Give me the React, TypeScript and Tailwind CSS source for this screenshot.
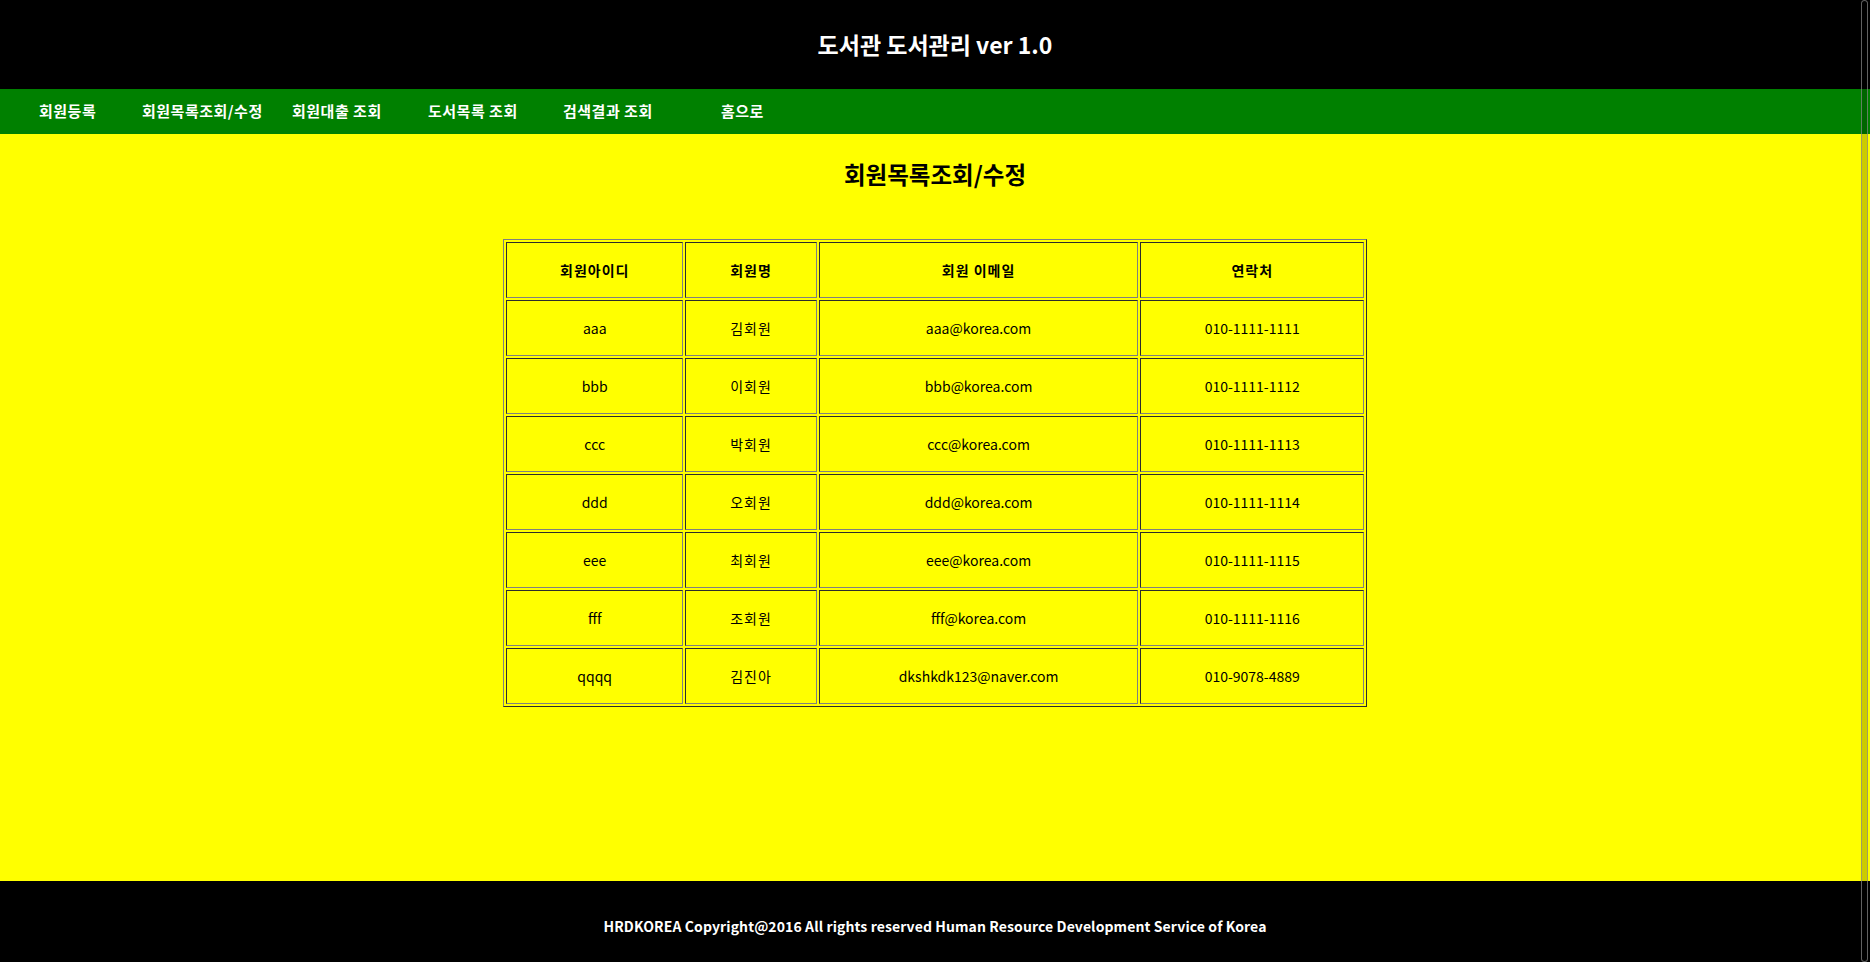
const members = [
  { id: "aaa", name: "김회원", email: "aaa@korea.com", phone: "010-1111-1111" },
  { id: "bbb", name: "이회원", email: "bbb@korea.com", phone: "010-1111-1112" },
  { id: "ccc", name: "박회원", email: "ccc@korea.com", phone: "010-1111-1113" },
  { id: "ddd", name: "오회원", email: "ddd@korea.com", phone: "010-1111-1114" },
  { id: "eee", name: "최회원", email: "eee@korea.com", phone: "010-1111-1115" },
  { id: "fff", name: "조회원", email: "fff@korea.com", phone: "010-1111-1116" },
  { id: "qqqq", name: "김진아", email: "dkshkdk123@naver.com", phone: "010-9078-4889" },
];

const menus = [
  { label: "회원등록", width: "w-[103px]" },
  { label: "회원목록조회/수정", width: "w-[150px]" },
  { label: "회원대출 조회", width: "w-[136px]" },
  { label: "도서목록 조회", width: "w-[135px]" },
  { label: "검색결과 조회", width: "w-[158px]" },
  { label: "홈으로", width: "w-[100px]" },
];

const cell = "border border-[#808080] [border-style:inset] text-center align-middle";

const App = () => {
  return (
    <div className="relative flex flex-col w-full h-[962px] font-['Noto_Sans_CJK_KR','Noto_Sans',sans-serif]">
      <header className="h-[89px] bg-black flex items-center justify-center">
        <h1 className="text-white text-[23px] font-bold leading-none">
          도서관 도서관리 ver 1.0
        </h1>
      </header>

      <nav className="h-[45px] bg-[#008000] flex items-center pl-[39px]">
        {menus.map((m) => (
          <a
            key={m.label}
            href="#"
            className={`${m.width} shrink-0 text-white text-[15px] tracking-[0.5px] font-bold whitespace-nowrap`}
          >
            {m.label}
          </a>
        ))}
      </nav>

      <main className="h-[747px] bg-[#ffff00] flex flex-col items-center">
        <h2 className="mt-[25px] text-[23.5px] font-bold text-black leading-[30px]">
          회원목록조회/수정
        </h2>
        <table className="mt-[50px] w-[864px] table-fixed border-separate border-spacing-[2px] border border-[#808080] [border-style:outset] text-[14px] text-black">
          <colgroup>
            <col className="w-[177px]" />
            <col className="w-[131px]" />
            <col className="w-[319px]" />
            <col className="w-[223px]" />
          </colgroup>
          <thead>
            <tr className="h-[56px]">
              <th className={`${cell} font-bold tracking-[1px]`}>회원아이디</th>
              <th className={`${cell} font-bold tracking-[1px]`}>회원명</th>
              <th className={`${cell} font-bold tracking-[1px]`}>회원 이메일</th>
              <th className={`${cell} font-bold tracking-[1px]`}>연락처</th>
            </tr>
          </thead>
          <tbody>
            {members.map((m) => (
              <tr key={m.id} className="h-[56px]">
                <td className={cell}>{m.id}</td>
                <td className={`${cell} tracking-[1px]`}>{m.name}</td>
                <td className={cell}>{m.email}</td>
                <td className={cell}>{m.phone}</td>
              </tr>
            ))}
          </tbody>
        </table>
      </main>

      <footer className="h-[81px] bg-black flex items-center justify-center pt-[9px]">
        <p className="text-white text-[14px] tracking-[0.1px] font-bold">
          HRDKOREA Copyright@2016 All rights reserved Human Resource Development Service of Korea
        </p>
      </footer>

      {/* overlay scrollbar */}
      <div className="absolute top-0 bottom-0 right-[2px] w-[7px] border border-[#8a8a8a]/70 bg-black/20 rounded-sm" />
    </div>
  );
};

export default App;
